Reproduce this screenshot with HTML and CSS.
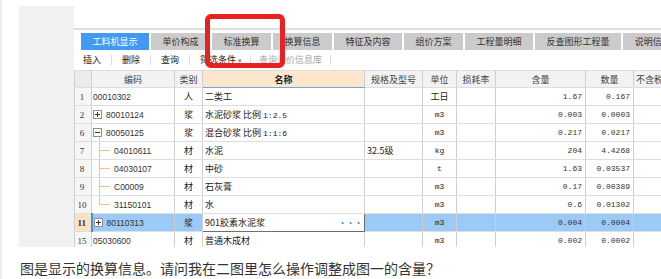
FILE: index.html
```html
<!DOCTYPE html>
<html>
<head>
    <title>换算信息</title>
    <meta charset="utf-8">
    <meta name="viewport" content="width=device-width, initial-scale=1">
    <link rel="stylesheet" href="styles.css">
</head>
<body>
    <div class="page">
        <div class="shot">
            <div class="shot-side"></div>
            <div class="shot-main">
                <div class="topbar"></div>
                <div class="tabs">
                    <span class="tab active">工料机显示</span>
                    <span class="tab">单价构成</span>
                    <span class="tab">标准换算</span>
                    <span class="tab">换算信息</span>
                    <span class="tab">特征及内容</span>
                    <span class="tab">组价方案</span>
                    <span class="tab">工程量明细</span>
                    <span class="tab">反查图形工程量</span>
                    <span class="tab">说明信息</span>
                </div>
                <div class="toolbar">
                    <span class="tool">插入</span>
                    <span class="tool">删除</span>
                    <span class="tool">查询</span>
                    <span class="tool drop">筛选条件<span class="caret">▾</span></span>
                    <span class="tool off">查询造价信息库</span>
                </div>
                <table class="grid">
                    <colgroup>
                        <col class="c-num">
                        <col class="c-code">
                        <col class="c-type">
                        <col class="c-name">
                        <col class="c-spec">
                        <col class="c-unit">
                        <col class="c-loss">
                        <col class="c-qty">
                        <col class="c-amt">
                        <col class="c-tax">
                    </colgroup>
                    <thead>
                        <tr>
                            <th class="num"></th>
                            <th>编码</th>
                            <th>类别</th>
                            <th class="sorted">名称</th>
                            <th>规格及型号</th>
                            <th>单位</th>
                            <th>损耗率</th>
                            <th>含量</th>
                            <th>数量</th>
                            <th class="left">不含税市场价</th>
                        </tr>
                    </thead>
                    <tbody>
                        <tr>
                            <td class="num">1</td>
                            <td class="code">00010302</td>
                            <td class="mid">人</td>
                            <td>二类工</td>
                            <td></td>
                            <td class="mid">工日</td>
                            <td></td>
                            <td class="val">1.67</td>
                            <td class="val">0.167</td>
                            <td></td>
                        </tr>
                        <tr>
                            <td class="num">2</td>
                            <td class="code"><svg class="exp" width="9" height="9" viewBox="0 0 9 9"><rect x="0.5" y="0.5" width="8" height="8" fill="#fff" stroke="#8f8f8f"/><path d="M2 4.5h5M4.5 2v5" stroke="#333"/></svg>80010124</td>
                            <td class="mid">浆</td>
                            <td>水泥砂浆 比例 <span class="mono">1:2.5</span></td>
                            <td></td>
                            <td class="mid mono">m3</td>
                            <td></td>
                            <td class="val">0.003</td>
                            <td class="val">0.0003</td>
                            <td></td>
                        </tr>
                        <tr>
                            <td class="num">6</td>
                            <td class="code open"><svg class="exp" width="9" height="9" viewBox="0 0 9 9"><rect x="0.5" y="0.5" width="8" height="8" fill="#fff" stroke="#8f8f8f"/><path d="M2 4.5h5" stroke="#333"/></svg>80050125</td>
                            <td class="mid">浆</td>
                            <td>混合砂浆 比例 <span class="mono">1:1:6</span></td>
                            <td></td>
                            <td class="mid mono">m3</td>
                            <td></td>
                            <td class="val">0.217</td>
                            <td class="val">0.0217</td>
                            <td></td>
                        </tr>
                        <tr>
                            <td class="num">7</td>
                            <td class="code child">04010611</td>
                            <td class="mid">材</td>
                            <td>水泥</td>
                            <td>32.5级</td>
                            <td class="mid mono">kg</td>
                            <td></td>
                            <td class="val">204</td>
                            <td class="val">4.4268</td>
                            <td></td>
                        </tr>
                        <tr>
                            <td class="num">8</td>
                            <td class="code child">04030107</td>
                            <td class="mid">材</td>
                            <td>中砂</td>
                            <td></td>
                            <td class="mid mono">t</td>
                            <td></td>
                            <td class="val">1.63</td>
                            <td class="val">0.03537</td>
                            <td></td>
                        </tr>
                        <tr>
                            <td class="num">9</td>
                            <td class="code child">C00009</td>
                            <td class="mid">材</td>
                            <td>石灰膏</td>
                            <td></td>
                            <td class="mid mono">m3</td>
                            <td></td>
                            <td class="val">0.17</td>
                            <td class="val">0.00389</td>
                            <td></td>
                        </tr>
                        <tr>
                            <td class="num">10</td>
                            <td class="code child last">31150101</td>
                            <td class="mid">材</td>
                            <td>水</td>
                            <td></td>
                            <td class="mid mono">m3</td>
                            <td></td>
                            <td class="val">0.6</td>
                            <td class="val">0.01302</td>
                            <td></td>
                        </tr>
                        <tr class="selected">
                            <td class="num">11</td>
                            <td class="code focus"><svg class="exp" width="9" height="9" viewBox="0 0 9 9"><rect x="0.5" y="0.5" width="8" height="8" fill="#fff" stroke="#8f8f8f"/><path d="M2 4.5h5M4.5 2v5" stroke="#333"/></svg>80110313</td>
                            <td class="mid">浆</td>
                            <td class="editing">901胶素水泥浆<span class="more">···</span></td>
                            <td></td>
                            <td class="mid mono">m3</td>
                            <td></td>
                            <td class="val">0.004</td>
                            <td class="val">0.0004</td>
                            <td></td>
                        </tr>
                        <tr>
                            <td class="num">15</td>
                            <td class="code">05030600</td>
                            <td class="mid">材</td>
                            <td>普通木成材</td>
                            <td></td>
                            <td class="mid mono">m3</td>
                            <td></td>
                            <td class="val">0.002</td>
                            <td class="val">0.0002</td>
                            <td></td>
                        </tr>
                    </tbody>
                </table>
            </div>
        </div>
        <p class="question">图是显示的换算信息。请问我在二图里怎么操作调整成图一的含量？</p>
        <div class="mark"></div>
    </div>
</body>
</html>
```

FILE: styles.css
```css
body {
    margin: 0;
    font-family: "Noto Sans CJK SC", sans-serif;
    background-color: #fff;
}
.page {
    position: relative;
    height: 279px;
    box-sizing: border-box;
    padding-top: 6px;
    border-left: 2px solid #ebebeb;
    overflow: hidden;
}
.shot {
    display: flex;
    margin-left: 17px;
    height: 241px;
    background-color: #f1f1f1;
}
.shot-side {
    flex: none;
    width: 55px;
}
.shot-main {
    flex: 1;
    min-width: 0;
    overflow: hidden;
    background-color: #fff;
}
.topbar {
    height: 22px;
    border-bottom: 2px solid #dedede;
}
.tabs {
    display: flex;
    gap: 2px;
    height: 17px;
    padding: 3px 0 0 7px;
}
.tab {
    flex: none;
    padding: 0 11.5px;
    line-height: 17px;
    font-size: 9px;
    color: #333;
    background-color: #cbcbcb;
    white-space: nowrap;
}
.tab.active {
    color: #fff;
    background-color: #4298f3;
}
.toolbar {
    display: flex;
    align-items: center;
    height: 20px;
    font-size: 9px;
    color: #222;
}
.tool {
    padding: 0 10px;
    line-height: 10px;
    border-right: 1px solid #dcdcdc;
    white-space: nowrap;
}
.tool:first-child {
    padding-left: 9px;
}
.tool.drop {
    padding-right: 8px;
}
.caret {
    margin-left: 2px;
    font-size: 7px;
    color: #888;
}
.tool.off {
    padding-left: 8px;
    padding-right: 8px;
    color: #a8a8a8;
}
.grid {
    border-collapse: collapse;
    table-layout: fixed;
    width: 620px;
    font-size: 9px;
    color: #222;
}
.grid th,
.grid td {
    height: 17px;
    padding: 0 2px;
    border: 1px solid #dedede;
    border-left-color: #d0d0d0;
    border-right-color: #d0d0d0;
    white-space: nowrap;
    overflow: hidden;
    text-align: left;
}
.grid th {
    height: 16px;
    font-weight: normal;
    color: #444;
    text-align: center;
    background-color: #f2f2f2;
}
.grid th.sorted {
    font-weight: bold;
    color: #222;
    background-color: #fde6cb;
    border-bottom-color: #6fa6dc;
}
.grid th.left {
    text-align: left;
}
.c-num { width: 17px; }
.c-code { width: 83px; }
.c-type { width: 28px; }
.c-name { width: 162px; }
.c-spec { width: 58px; }
.c-unit { width: 34px; }
.c-loss { width: 39px; }
.c-qty { width: 90px; }
.c-amt { width: 48px; }
.c-tax { width: 61px; }
.grid .num {
    padding: 0 2px 0 0;
    text-align: center;
    font-family: "Liberation Serif", serif;
    font-size: 9px;
    color: #333;
    background-color: #f6f6f6;
}
.grid th.num {
    background-color: #ebebeb;
}
.grid td.code {
    padding-left: 1px;
    font-family: "Liberation Sans", sans-serif;
    font-size: 8.5px;
    color: #333;
}
.exp {
    vertical-align: -1px;
    margin-right: 4px;
}
.grid td.open {
    background: linear-gradient(#f7c27c, #f7c27c) no-repeat 7px 13px / 1px 6px;
}
.grid td.child {
    padding-left: 22px;
    background:
        linear-gradient(#f7c27c, #f7c27c) no-repeat 7px 0 / 1px 100%,
        linear-gradient(#f7c27c, #f7c27c) no-repeat 7px 50% / 11px 1px;
}
.grid td.child.last {
    background:
        linear-gradient(#f7c27c, #f7c27c) no-repeat 7px 0 / 1px 50%,
        linear-gradient(#f7c27c, #f7c27c) no-repeat 7px 50% / 11px 1px;
}
.grid td.mid {
    text-align: center;
}
.mono {
    font-family: "Liberation Mono", monospace;
    font-size: 8px;
}
.grid td.val {
    padding-right: 3px;
    text-align: right;
    font-family: "Liberation Mono", monospace;
    font-size: 8px;
    color: #333;
}
.selected td {
    background-color: #9ccaf6;
}
.grid .selected td.num {
    font-weight: bold;
    background-color: #fde1c3;
}
.grid .selected td.focus {
    border-left: 2px solid #4a90e2;
}
.grid .selected td.editing {
    border: 1px solid #6e6e6e;
    background-color: #fff;
}
.more {
    float: right;
    color: #3b8de0;
    letter-spacing: -1px;
}
.question {
    margin: 11px 0 0 18px;
    font-size: 14px;
    line-height: 20px;
    color: #333;
}
.mark {
    position: absolute;
    left: 203px;
    top: 14px;
    width: 70px;
    height: 44px;
    border: 5px solid #e8221e;
    border-radius: 6px;
}
```
